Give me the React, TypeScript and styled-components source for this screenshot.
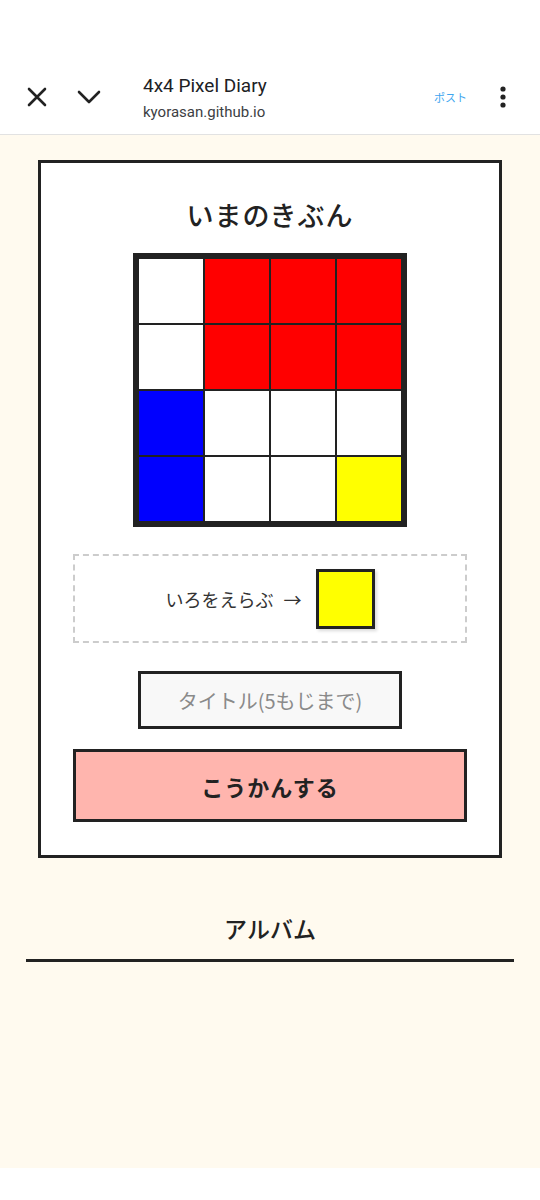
import React from "react";
import styled, { createGlobalStyle } from "styled-components";

const GlobalStyle = createGlobalStyle`
  html, body {
    margin: 0;
    padding: 0;
    background: #fff;
  }
  body {
    font-family: "Noto Sans CJK JP", "Noto Sans", sans-serif;
    color: #222;
  }
  * { box-sizing: border-box; }
`;

const Page = styled.div`
  display: flex;
  flex-direction: column;
  width: 540px;
  height: 1200px;
  background: #fff;
`;

const StatusSpace = styled.div`
  height: 60px;
  flex-shrink: 0;
`;

const Header = styled.header`
  display: flex;
  align-items: center;
  height: 75px;
  flex-shrink: 0;
  padding: 0 33px 0 26px;
  border-bottom: 1px solid #e2e2e2;
`;

const IconButton = styled.div<{ $w: number }>`
  display: flex;
  align-items: center;
  justify-content: center;
  width: ${(p) => p.$w}px;
  height: 24px;
  color: #222;
`;

const HeaderText = styled.div`
  display: flex;
  flex-direction: column;
  margin-left: 41px;
  flex: 1;
  padding-top: 2px;
  font-family: Roboto, "Noto Sans", sans-serif;
`;

const PageTitle = styled.div`
  font-size: 19px;
  line-height: 24px;
  color: #202124;
`;

const PageUrl = styled.div`
  font-size: 15px;
  line-height: 22px;
  color: #3c4043;
  margin-top: 3px;
`;

const PostLink = styled.span`
  font-size: 11px;
  color: #3ea6ef;
  margin-right: 32px;
  font-family: "Noto Sans CJK JP", sans-serif;
`;

const Main = styled.main`
  flex: 1;
  display: flex;
  flex-direction: column;
  background: #fffaef;
  padding-top: 25px;
`;

const Card = styled.section`
  margin: 0 38px;
  border: 3px solid #222;
  background: #fff;
  padding: 34px 32px 33px;
  display: flex;
  flex-direction: column;
  align-items: center;
`;

const CardTitle = styled.h2`
  margin: 0;
  font-size: 27px;
  line-height: 36px;
  font-weight: 500;
  letter-spacing: 1px;
`;

const Grid = styled.div`
  margin-top: 20px;
  display: grid;
  grid-template-columns: repeat(4, 64px);
  grid-auto-rows: 64px;
  gap: 2px;
  padding: 2px;
  border: 4px solid #222;
  background: #222;
`;

const Cell = styled.div<{ $color: string }>`
  background: ${(p) => p.$color};
`;

const Picker = styled.div`
  margin-top: 27px;
  align-self: stretch;
  height: 89px;
  border: 2px dashed #ccc;
  display: flex;
  align-items: center;
  justify-content: center;
  gap: 14px;
`;

const PickerLabel = styled.span`
  font-size: 18px;
  color: #333;
`;

const Arrow = styled.span`
  margin-left: 10px;
`;

const Swatch = styled.div<{ $color: string }>`
  width: 59px;
  height: 60px;
  border: 3px solid #222;
  background: ${(p) => p.$color};
  box-shadow: 2px 2px 3px rgba(0, 0, 0, 0.15);
`;

const TitleInput = styled.input`
  margin-top: 28px;
  width: 264px;
  height: 58px;
  border: 3px solid #222;
  background: #f8f8f8;
  font-family: "Noto Sans CJK JP", sans-serif;
  font-size: 20px;
  text-align: center;
  color: #222;
  outline: none;
  &::placeholder {
    color: #8a8a8a;
  }
`;

const ExchangeButton = styled.button`
  margin-top: 20px;
  align-self: stretch;
  height: 73px;
  border: 3px solid #222;
  background: #ffb5ae;
  font-family: "Noto Sans CJK JP", sans-serif;
  font-size: 22px;
  font-weight: 700;
  color: #222;
  letter-spacing: 1px;
  cursor: pointer;
`;

const Album = styled.section`
  margin: 54px 26px 0;
`;

const AlbumTitle = styled.h3`
  margin: 0;
  text-align: center;
  font-size: 23px;
  line-height: 32px;
  font-weight: 500;
  padding-bottom: 15px;
  border-bottom: 3px solid #222;
`;

const BottomBar = styled.div`
  height: 32px;
  flex-shrink: 0;
  background: #fff;
`;

const W = "#ffffff";
const R = "#ff0000";
const B = "#0000ff";
const Y = "#ffff00";

const pixels = [
  W, R, R, R,
  W, R, R, R,
  B, W, W, W,
  B, W, W, Y,
];

export default function App() {
  return (
    <Page>
      <GlobalStyle />
      <StatusSpace />
      <Header>
        <IconButton $w={22}>
          <svg width="20" height="20" viewBox="0 0 20 20">
            <path d="M2 2 L18 18 M18 2 L2 18" stroke="#222" strokeWidth="2.6" strokeLinecap="round" />
          </svg>
        </IconButton>
        <IconButton $w={26} style={{ marginLeft: 28 }}>
          <svg width="24" height="14" viewBox="0 0 24 14">
            <path d="M2 2 L12 12 L22 2" stroke="#222" strokeWidth="2.6" fill="none" strokeLinecap="round" strokeLinejoin="round" />
          </svg>
        </IconButton>
        <HeaderText>
          <PageTitle>4x4 Pixel Diary</PageTitle>
          <PageUrl>kyorasan.github.io</PageUrl>
        </HeaderText>
        <PostLink>ポスト</PostLink>
        <IconButton $w={8}>
          <svg width="6" height="22" viewBox="0 0 6 22">
            <circle cx="3" cy="3" r="2.6" fill="#222" />
            <circle cx="3" cy="11" r="2.6" fill="#222" />
            <circle cx="3" cy="19" r="2.6" fill="#222" />
          </svg>
        </IconButton>
      </Header>
      <Main>
        <Card>
          <CardTitle>いまのきぶん</CardTitle>
          <Grid>
            {pixels.map((c, i) => (
              <Cell key={i} $color={c} />
            ))}
          </Grid>
          <Picker>
            <PickerLabel>
              いろをえらぶ<Arrow>→</Arrow>
            </PickerLabel>
            <Swatch $color={Y} />
          </Picker>
          <TitleInput placeholder="タイトル(5もじまで)" />
          <ExchangeButton>こうかんする</ExchangeButton>
        </Card>
        <Album>
          <AlbumTitle>アルバム</AlbumTitle>
        </Album>
      </Main>
      <BottomBar />
    </Page>
  );
}
